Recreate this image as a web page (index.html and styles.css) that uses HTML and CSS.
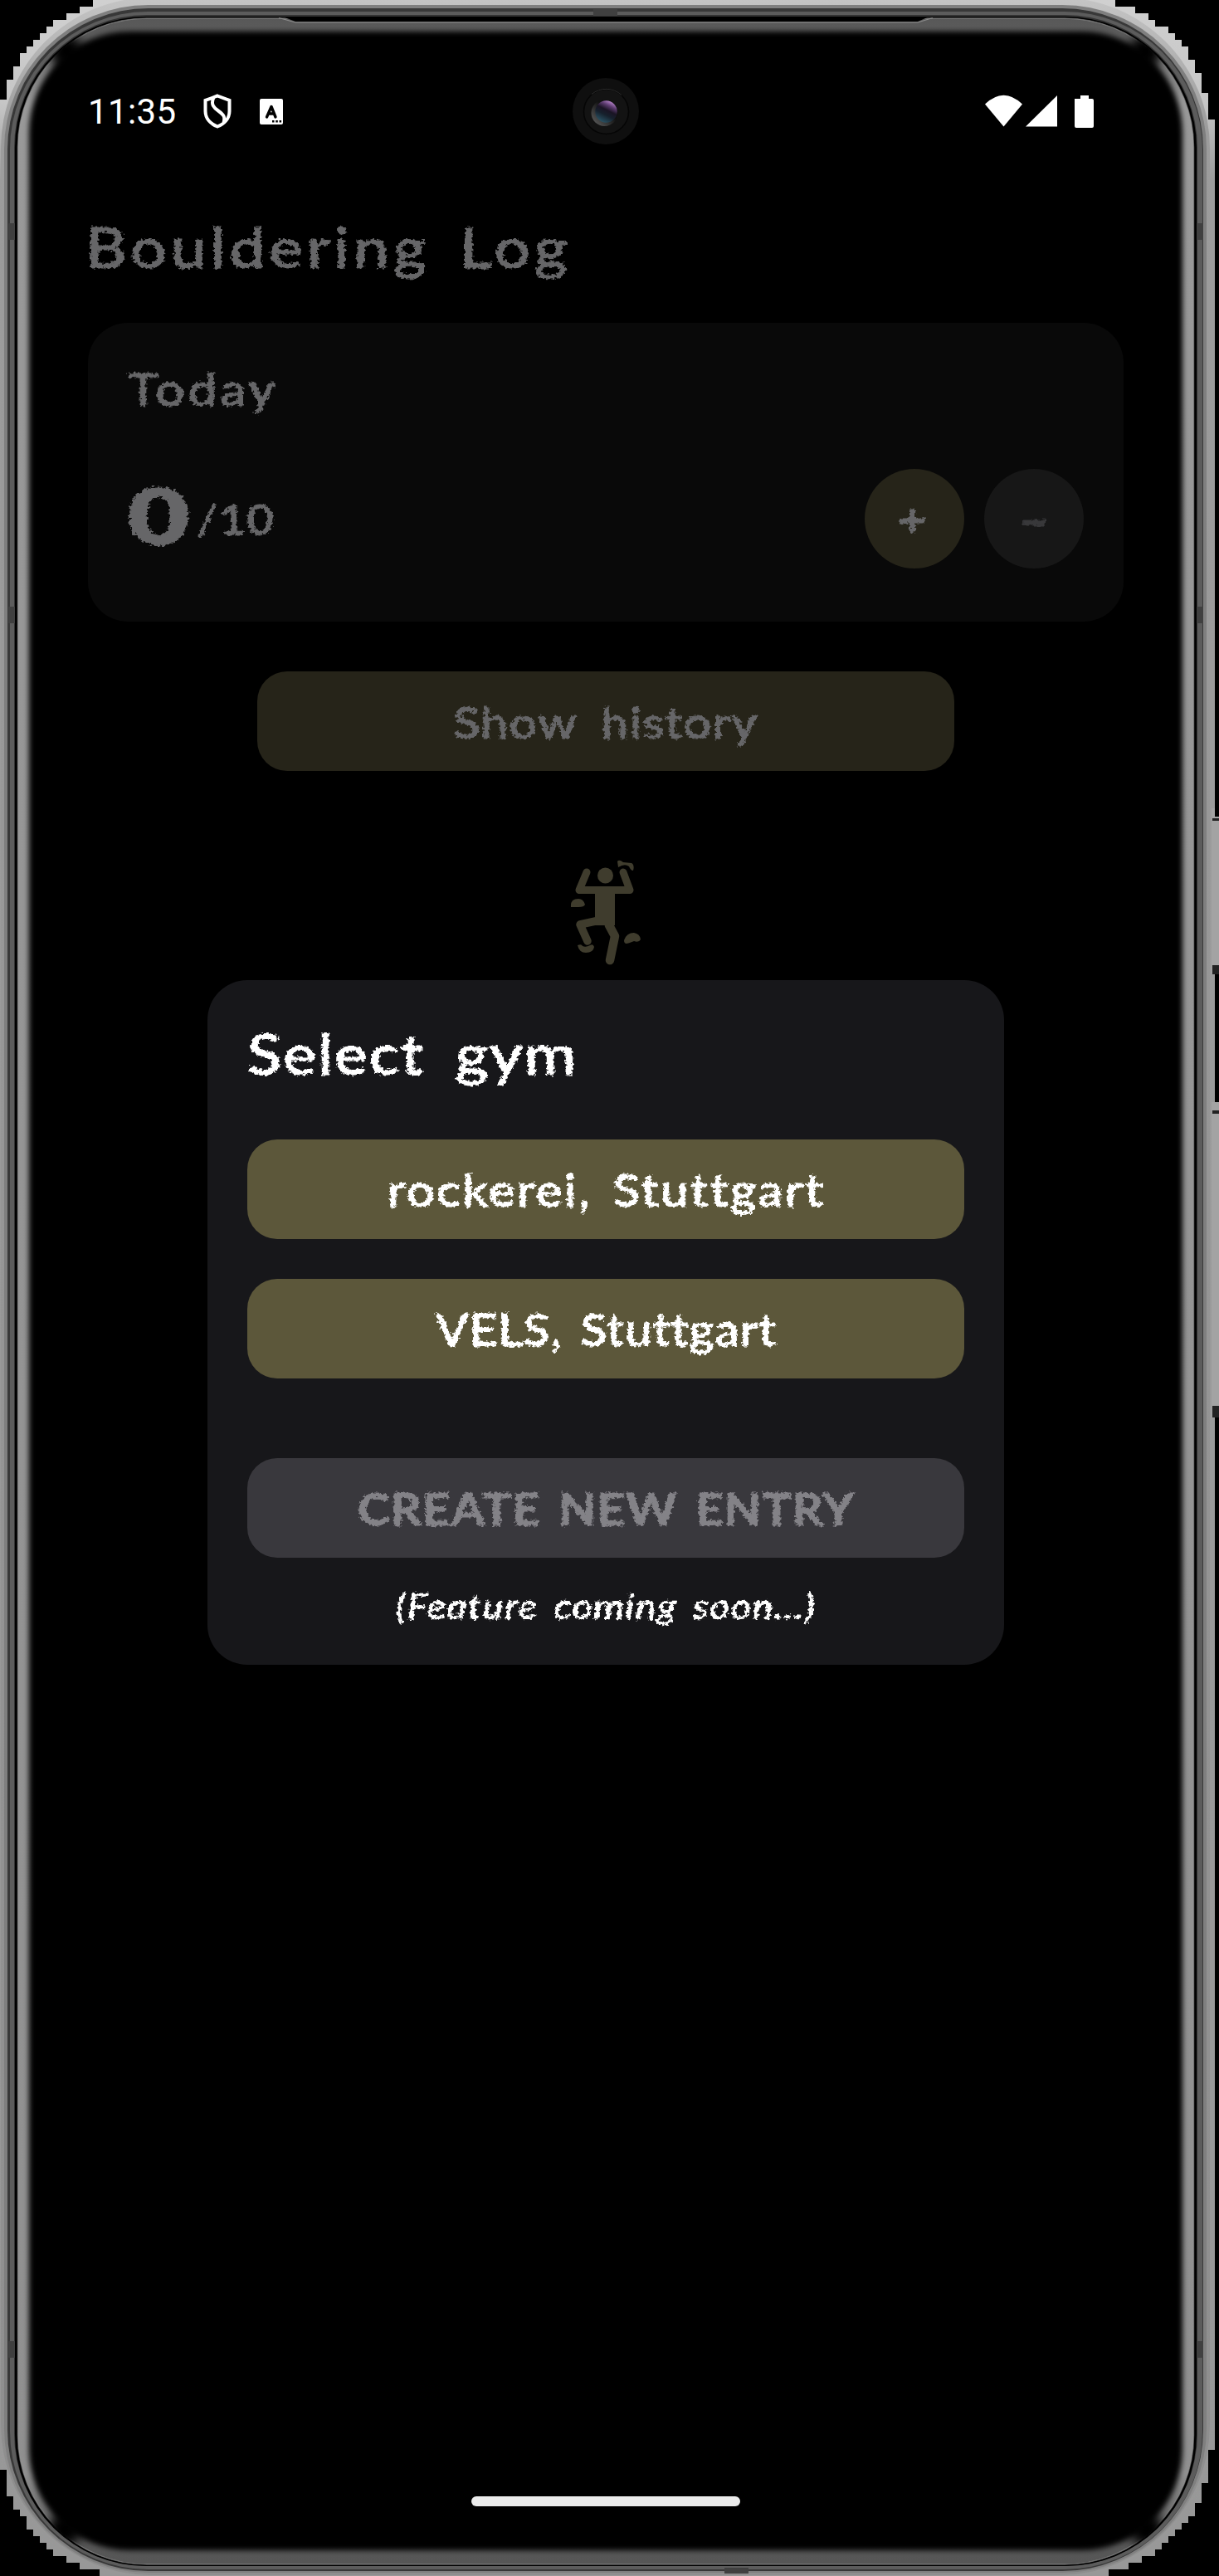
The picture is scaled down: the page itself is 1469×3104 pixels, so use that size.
FILE: index.html
```html
<!DOCTYPE html>
<html lang="en">
<head>
<meta charset="utf-8">
<title>Bouldering Log</title>
<link rel="stylesheet" href="styles.css">
</head>
<body>
<div class="device">
  <svg class="frame" viewBox="0 0 1469 3104" width="1469" height="3104" aria-hidden="true">
    <defs>
      <linearGradient id="edge" gradientUnits="userSpaceOnUse" x1="0" y1="0" x2="0" y2="3104"><stop offset="0" stop-color="#d0d0d0"/><stop offset=".04" stop-color="#c6c6c6"/><stop offset=".07" stop-color="#9c9c9c"/><stop offset="1" stop-color="#989898"/></linearGradient>
      <linearGradient id="steel" gradientUnits="userSpaceOnUse" x1="0" y1="0" x2="0" y2="3104"><stop offset="0" stop-color="#c4c4c4"/><stop offset=".05" stop-color="#9c9c9c"/><stop offset="1" stop-color="#8e8e8e"/></linearGradient>
      <linearGradient id="rimlight" gradientUnits="userSpaceOnUse" x1="0" y1="0" x2="0" y2="3104"><stop offset="0" stop-color="#555"/><stop offset=".015" stop-color="#5c5c5c"/><stop offset=".04" stop-color="#999"/><stop offset=".96" stop-color="#909090"/><stop offset=".985" stop-color="#585858"/><stop offset="1" stop-color="#555"/></linearGradient>
      <clipPath id="glass"><rect x="20" y="21" width="1420" height="3070" rx="157"/></clipPath>
      <filter id="soft" x="-5%" y="-5%" width="110%" height="110%"><feGaussianBlur stdDeviation="3"/></filter>
      <filter id="softer" x="-60%" y="-60%" width="220%" height="220%"><feGaussianBlur stdDeviation="7"/></filter>
      <filter id="chalk" x="-5%" y="-15%" width="110%" height="130%" color-interpolation-filters="sRGB"><feTurbulence type="fractalNoise" baseFrequency=".3" numOctaves="2" seed="4"/><feDisplacementMap in="SourceGraphic" scale="7" xChannelSelector="R" yChannelSelector="G"/></filter>
    </defs>
    <path fill="url(#edge)" d="M0 120H8V96H16V80H24V64H32V56H40V48H48V40H56V32H64V24H80V16H96V8H112V0H1344V8H1368V16H1384V24H1392V32H1408V40H1416V48H1424V56H1432V72H1440V88H1448V112H1456V144H1464V2952H1456V2992H1448V3016H1440V3032H1432V3040H1424V3048H1416V3056H1408V3064H1400V3072H1392V3080H1376V3088H1360V3096H1336V3104H120V3096H96V3088H80V3080H64V3072H56V3064H48V3056H40V3048H32V3032H24V3024H16V3008H8V2976H0Z"/>
    <rect x="1" y="-3" width="1457" height="3106" rx="182" fill="url(#steel)"/>
    <rect x="5" y="6" width="1449" height="3094" rx="174" fill="#7f7f7f"/>
    <rect x="9" y="10" width="1441" height="3088" rx="170" fill="#383838"/>
    <rect x="12" y="14" width="1437" height="3082" rx="166" fill="#5c5c5c"/>
    <rect x="17" y="18" width="1426" height="3074" rx="160" fill="#333"/>
    <rect x="18" y="20" width="1424" height="3072" rx="158" fill="#000"/>
    <g clip-path="url(#glass)">
      <rect x="21.500" y="22" width="1417" height="3068" rx="155" fill="url(#rimlight)" stroke="#999" stroke-opacity=".55" stroke-width="1.500"/>
      <rect x="35" y="38" width="1390" height="3035" rx="122" filter="url(#soft)"/>
      <g filter="url(#softer)"><circle cx="80" cy="62" r="20"/><circle cx="1380" cy="62" r="20"/><circle cx="78" cy="3048" r="20"/><circle cx="1382" cy="3048" r="20"/></g>
      <path d="M338 19H1122L1106 26H356Z"/>
      <path d="M336 21.500 356 27H1106L1124 21.500" fill="none" stroke="#8c8c8c" stroke-width="1.200"/>
    </g>
    <path fill="#404040" d="M10 269h8v20h-8zM1442 269h8v20h-8zM10 731h8v20h-8zM1442 731h8v20h-8zM10 2821h8v20h-8zM1442 2821h8v20h-8zM715 11h29v8h-29zM873 3094h29v7h-29z"/>
    <path fill="#a3a3a3" d="M1460 974h9v200h-9zM1460 1328h9v380h-9z"/>
    <path fill="#222" d="M1461 986h8v3h-8zM1461 1163h8v11h-8zM1461 1338h8v4h-8zM1461 1694h8v14h-8z"/>
    <path d="M1464 960h5v24h-5zM1464 1176h5v152h-5zM1464 1710h5v20h-5z"/>
  </svg>

  <main class="screen">
    <header class="status">
      <div class="status-left">
        <span class="clock">11:35</span>
        <svg class="shield" viewBox="0 0 34 42"><path d="M17 2.500 31.500 8V21C31.500 30 25 36.500 17 39.500 9 36.500 2.500 30 2.500 21V8ZM12.500 4.500C8.500 13 13 17 18 20.500 25 25.500 26.500 28 24.500 35" fill="none" stroke="#fff" stroke-width="4"/></svg>
        <svg class="abox" viewBox="0 0 28 31"><rect width="28" height="31" rx="2" fill="#fff"/><path d="M8.500 22 14 9.500 19 22M10.500 18H17" fill="none" stroke="#000" stroke-width="3.400" stroke-linecap="round" stroke-linejoin="round"/><path d="M15 26h2.500v2.500H15zM19.300 26h2.500v2.500h-2.500zM23.600 26h2.500v2.500h-2.500z"/></svg>
      </div>
      <svg class="camera" viewBox="0 0 80 80">
        <defs><linearGradient id="lens" x1=".8" y1="0" x2=".3" y2="1"><stop offset="0" stop-color="#d49be8"/><stop offset=".25" stop-color="#5d3c70"/><stop offset=".45" stop-color="#1a1424"/><stop offset=".65" stop-color="#16202c"/><stop offset="1" stop-color="#2b5668"/></linearGradient><linearGradient id="rim" x1="1" y1="0" x2="0" y2="1"><stop offset=".4" stop-color="#111"/><stop offset="1" stop-color="#666"/></linearGradient></defs>
        <circle cx="40" cy="40" r="40" fill="#0f0f0f"/><circle cx="40.500" cy="40.500" r="27" fill="#131313" stroke="#050505" stroke-width="1.500"/><path d="M23 19.500a27.500 27.500 0 0 1 36 1" fill="none" stroke="#2c2c2c"/><circle cx="38.500" cy="42" r="16" fill="url(#rim)"/><circle cx="40.500" cy="40.500" r="13.200" fill="url(#lens)"/>
      </svg>
      <svg class="signals" viewBox="0 0 132 40" fill="#fff"><path d="M0 11.500Q22.500-10 45 11.500L22.500 38.500ZM49 38.500 87 1V38.500ZM108 5h7V1h10v4h4q2 0 2 2v31q0 2-2 2h-19q-2 0-2-2V7z"/></svg>
    </header>

    <h1 class="title hand">Bouldering Log</h1>
    <section class="card">
      <h2 class="today hand">Today</h2>
      <div class="counter">
        <p class="score"><strong class="hand">0</strong><span class="hand">/10</span></p>
        <div class="steps"><button class="round plus"><span class="hand">+</span></button><button class="round minus"><span class="hand">-</span></button></div>
      </div>
    </section>
    <button class="history"><span class="hand">Show history</span></button>
    <svg class="climber" viewBox="0 0 90 130" fill="none" stroke="#3f3c2d" stroke-width="9" stroke-linecap="round" stroke-linejoin="round">
      <path d="M21 8 12 29.500H73L65 8"/><path d="M48 72 55 85 49 114" stroke-width="10.500"/><path d="M36 66 13 71 22 91" stroke-width="9.500"/><path d="M31 29H55V72H31Z" fill="#3f3c2d" stroke="none"/>
      <g fill="#3f3c2d" stroke="none"><circle cx="43.500" cy="12" r="9.500"/><path d="M2 50Q1 40 11 40 17 40 19 47 18 50 11 50ZM10 96Q15 94 16 97 20 99 25 96 29 94 30 98 29 105 20 105 12 105 10 96ZM66 90Q69 81 78 81 85 82 86 89 84 93 78 91 71 94 69 94Q66 94 66 90ZM58-5Q60-8 65-4L75-3Q79-1 77 6 74 6 72 1 67-3 59 2Z"/></g>
    </svg>

    <section class="dialog">
      <h2 class="dialog-title hand">Select gym</h2>
      <button class="choice"><span class="hand rock">rockerei, Stuttgart</span></button>
      <button class="choice"><span class="hand vels">VELS, Stuttgart</span></button>
      <button class="choice disabled"><span class="hand create">CREATE NEW ENTRY</span></button>
      <p class="note hand">(Feature coming soon...)</p>
    </section>
    <div class="home"></div>
  </main>
</div>
</body>
</html>
```
FILE: styles.css
```css
* { box-sizing: border-box; }
body { margin: 0; background: #000; }
h1, h2, p { margin: 0; font-weight: 400; }
button { border: 0; padding: 0; margin: 0; display: flex; align-items: center; justify-content: center; }
.device { position: relative; width: 1469px; height: 3104px; overflow: hidden; }
.frame { position: absolute; left: 0; top: 0; }
.screen { position: relative; display: flex; flex-direction: column; width: 1460px; height: 3104px; padding: 94px 106px 0; }
.hand { font-family: Lato, sans-serif; font-weight: 500; white-space: nowrap; filter: url(#chalk); transform: scaleX(1.12); -webkit-text-stroke: 1px currentColor; }
.status { display: flex; height: 80px; align-items: center; justify-content: space-between; position: relative; }
.status-left { display: flex; align-items: center; }
.clock { width: 139px; font: 42px/80px Roboto, sans-serif; color: #fff; letter-spacing: .4px; padding-top: 2px; }
.shield { width: 34px; height: 42px; margin-right: 34px; }
.abox { width: 28px; height: 31px; }
.camera { position: absolute; left: 584px; top: 0; width: 80px; height: 80px; }
.signals { width: 132px; height: 40px; margin-right: 35px; }
.title { height: 80px; margin-top: 86px; line-height: 74px; font-size: 67px; letter-spacing: 4px; word-spacing: 10px; color: #666668; transform: translateX(-3px) scaleX(1.15); transform-origin: 0 0; }
.card { width: 1248px; height: 360px; margin-top: 49px; border-radius: 48px; background: #090909; padding: 48px; color: #666668; }
.today { font-size: 54px; line-height: 64px; height: 70px; letter-spacing: 3.4px; transform: scaleX(1.15); transform-origin: 0 0; }
.counter { display: flex; justify-content: space-between; height: 120px; margin-top: 58px; }
.score { display: flex; align-items: center; line-height: 116px; font-size: 50px; letter-spacing: 1px; }
.score strong { width: 58px; margin-right: 25px; font-size: 93px; line-height: 106px; height: 116px; font-weight: 800; transform: scaleX(1.38); transform-origin: 0 50%; letter-spacing: 0; }
.score span { transform-origin: 0 50%; }
.steps { display: flex; gap: 24px; }
.round { width: 120px; height: 120px; border-radius: 50%; color: #666668; font-size: 54px; }
.plus { background: #262419; }
.plus .hand { font-weight: 700; margin-right: 4px; }
.minus { background: #171717; color: #38383a; }
.minus .hand { font-weight: 900; transform: scaleX(1.7); }
.history { width: 840px; height: 120px; margin: 60px 0 0 204px; border-radius: 36px; background: #262419; color: #666668; font-size: 53px; letter-spacing: 1px; word-spacing: 12px; }
.climber { width: 90px; height: 130px; margin: 114px 0 0 580px; overflow: visible; }
.dialog { width: 960px; height: 825px; margin: 8px 0 0 144px; border-radius: 48px; background: #17171a; padding: 48px; color: #fff; }
.dialog-title { height: 96px; line-height: 80px; font-size: 68px; letter-spacing: 1.5px; word-spacing: 14px; transform-origin: 0 0; }
.choice { width: 864px; height: 120px; margin-top: 48px; border-radius: 36px; background: #5c573a; color: #fff; font-size: 54px; }
.disabled { margin-top: 96px; background: #39383d; color: #838287; }
.rock { letter-spacing: 1.8px; word-spacing: 8px; }
.vels { letter-spacing: .8px; word-spacing: 6px; transform: scaleX(1.08); }
.create { font-weight: 700; letter-spacing: 1px; word-spacing: 6px; transform: scaleX(1.08); }
.note { margin-top: 28px; text-align: center; font-size: 42px; line-height: 60px; font-style: italic; letter-spacing: 1.1px; word-spacing: 6px; -webkit-text-stroke-width: .6px; }
.home { position: absolute; left: 568px; top: 3008px; width: 324px; height: 12px; border-radius: 6px; background: #ebebeb; }
```
